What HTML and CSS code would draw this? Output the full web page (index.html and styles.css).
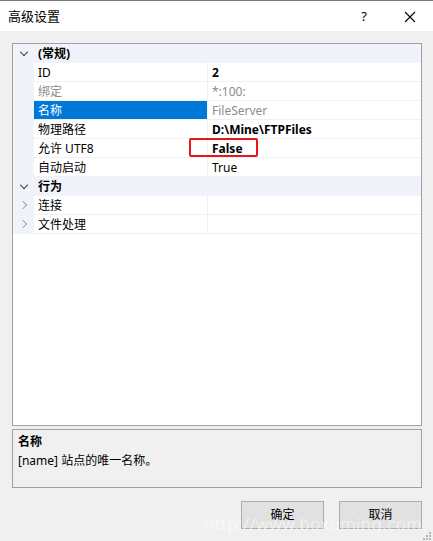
FILE: index.html
```html
<!DOCTYPE html>
<html lang="zh-CN">
<head>
  <meta charset="UTF-8">
  <title>高级设置</title>
  <link rel="stylesheet" href="styles.css">
</head>
<body>

<div class="dialog">
  <!--标题栏-->
  <div class="titlebar">
    <span class="title">高级设置</span>
    <span class="help">?</span>
    <span class="close">
      <svg width="12" height="12" viewBox="0 0 12 12"><path d="M1 1L11 11M11 1L1 11" stroke="#000" stroke-width="1.1" fill="none"/></svg>
    </span>
  </div>

  <div class="content">
    <!--属性表格-->
    <div class="grid">
      <div class="row cat">
        <div class="margin"><i class="chev down"></i></div>
        <div class="label">(常规)</div>
      </div>
      <div class="row">
        <div class="margin"></div>
        <div class="label">ID</div>
        <div class="value bold">2</div>
      </div>
      <div class="row">
        <div class="margin"></div>
        <div class="label gray">绑定</div>
        <div class="value gray">*:100:</div>
      </div>
      <div class="row">
        <div class="margin"></div>
        <div class="label selected">名称</div>
        <div class="value gray">FileServer</div>
      </div>
      <div class="row">
        <div class="margin"></div>
        <div class="label">物理路径</div>
        <div class="value bold">D:\Mine\FTPFiles</div>
      </div>
      <div class="row">
        <div class="margin"></div>
        <div class="label">允许 UTF8</div>
        <div class="value bold">False<span class="mark"></span></div>
      </div>
      <div class="row">
        <div class="margin"></div>
        <div class="label">自动启动</div>
        <div class="value">True</div>
      </div>
      <div class="row cat">
        <div class="margin"><i class="chev down"></i></div>
        <div class="label">行为</div>
      </div>
      <div class="row">
        <div class="margin"><i class="chev right"></i></div>
        <div class="label">连接</div>
        <div class="value"></div>
      </div>
      <div class="row">
        <div class="margin"><i class="chev right"></i></div>
        <div class="label">文件处理</div>
        <div class="value"></div>
      </div>
    </div>

    <!--说明-->
    <div class="desc">
      <div class="desc-title">名称</div>
      <div class="desc-text">[name] 站点的唯一名称。</div>
    </div>

    <div class="buttons">
      <a href="javascript:;" class="btn">确定</a>
      <a href="javascript:;" class="btn">取消</a>
    </div>
  </div>

  <div class="watermark">http://www.boxuming.com</div>
  <div class="grip">
    <svg width="8" height="8" viewBox="0 0 8 8" fill="#b5b5b5">
      <rect x="6" y="0" width="2" height="2"/>
      <rect x="3" y="3" width="2" height="2"/><rect x="6" y="3" width="2" height="2"/>
      <rect x="0" y="6" width="2" height="2"/><rect x="3" y="6" width="2" height="2"/><rect x="6" y="6" width="2" height="2"/>
    </svg>
  </div>
</div>

</body>
</html>
```

FILE: styles.css
```css
* {
  margin: 0;
  padding: 0;
  box-sizing: border-box;
}

body {
  background-color: #f0f0f0;
  font: 12px/18px "Noto Sans", "Noto Sans CJK SC", sans-serif;
  color: #000;
}

.dialog {
  width: 433px;
  height: 541px;
  position: relative;
  display: flex;
  flex-direction: column;
  overflow: hidden;
}

.titlebar {
  height: 31px;
  background-color: #fff;
  border-top: 1px solid #7a7a7a;
  display: flex;
  align-items: center;
  padding-left: 8px;
}

.title {
  font-size: 13px;
  flex: 1;
}

.help {
  font-size: 13px;
  width: 46px;
  text-align: center;
}

.close {
  width: 46px;
  display: flex;
  justify-content: center;
  padding-top: 1px;
}

.content {
  padding: 12px 11px 0 12px;
  display: flex;
  flex-direction: column;
}

/*
  属性表格：左边一列窄的缩进区，中间是名称，右边是值
*/
.grid {
  height: 383px;
  border: 1px solid #a0a0a0;
  background-color: #fff;
}

.row {
  display: flex;
  height: 19px;
  border-bottom: 1px solid #eef1f6;
}

.row .margin {
  width: 21px;
  background-color: #f0f4fa;
  display: flex;
  align-items: center;
  justify-content: center;
}

.row .label {
  width: 174px;
  padding: 1px 0 0 4px;
  border-right: 1px solid #eef1f6;
  white-space: nowrap;
}

.row .value {
  flex: 1;
  padding: 1px 0 0 4px;
  position: relative;
  white-space: nowrap;
}

.row.cat {
  background-color: #f0f4fa;
  border-bottom-color: #f0f4fa;
}

.row.cat .label {
  font-weight: 700;
  border-right: none;
}

.gray {
  color: #8c8c8c;
}

.bold {
  font-weight: 700;
}

.label.selected {
  background-color: #0078d7;
  color: #fff;
}

.chev {
  display: block;
  width: 6px;
  height: 6px;
  border-right: 1.5px solid #404040;
  border-bottom: 1.5px solid #404040;
}

.chev.down {
  transform: translateY(-1px) rotate(45deg);
}

.chev.right {
  border-color: #a6a6a6;
  transform: translateX(-1px) rotate(-45deg);
}

/* 红色标注框 */
.mark {
  position: absolute;
  left: -19px;
  top: -1px;
  width: 69px;
  height: 19px;
  border: 2px solid #e8171b;
  border-radius: 2px;
}

.desc {
  margin-top: 3px;
  height: 59px;
  border: 1px solid #a0a0a0;
  padding: 2px 5px;
  line-height: 19px;
}

.desc-title {
  font-weight: 700;
}

.buttons {
  margin-top: 13px;
  display: flex;
  justify-content: flex-end;
  gap: 15px;
}

.btn {
  width: 83px;
  height: 28px;
  background-color: #e1e1e1;
  border: 1px solid #adadad;
  color: #000;
  text-decoration: none;
  text-align: center;
  line-height: 26px;
}

.watermark {
  position: absolute;
  left: 204px;
  top: 513px;
  font: 300 17px/22px "Noto Sans", sans-serif;
  color: rgba(255, 255, 255, 0.75);
  letter-spacing: 0.6px;
}

.grip {
  position: absolute;
  right: 2px;
  bottom: 1px;
  line-height: 0;
}
```
